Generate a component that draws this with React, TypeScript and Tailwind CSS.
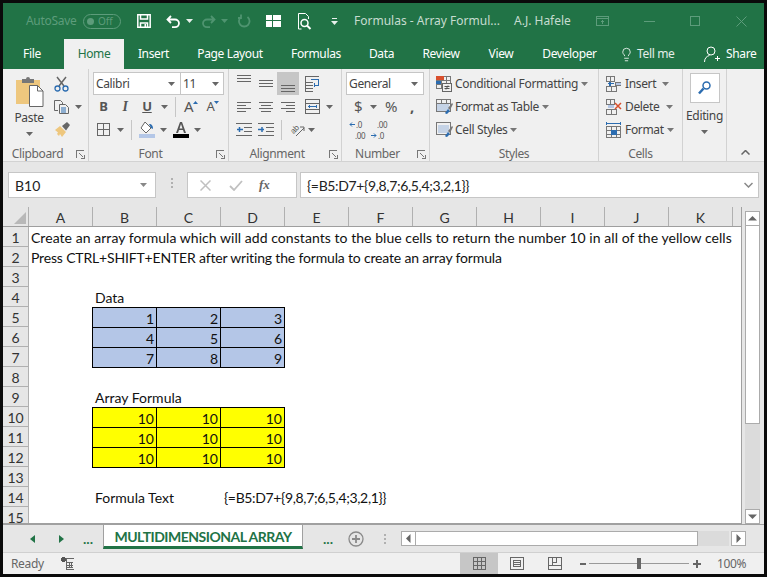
import React from 'react';
import { Lightbulb } from 'lucide-react';

const Caret = ({ color = '#666' }: { color?: string }) => (
  <svg width="7" height="4" viewBox="0 0 7 4"><path d="M0 0h7L3.5 4z" fill={color} /></svg>
);

const Slot = ({ className = '', children }: { className?: string; children?: React.ReactNode }) => (
  <div className={`flex h-full shrink-0 items-center justify-center ${className}`}>{children}</div>
);

const Sep = ({ className = '' }: { className?: string }) => <div className={`h-[20px] w-px shrink-0 self-center bg-[#c6c6c6] ${className}`} />;

const Launcher = () => (
  <svg width="9" height="9" viewBox="0 0 9 9" fill="none" stroke="#777" shapeRendering="crispEdges">
    <path d="M.5 8V.5H8M3 3l4.5 4.5M4.5 8.500h4v-4" />
  </svg>
);

const Group = ({ label, className, launcher, children }: { label: string; className: string; launcher?: boolean; children: React.ReactNode }) => (
  <div className={`flex shrink-0 flex-col border-r border-[#d2d2d2] ${className}`}>
    <div className="h-[72px] pt-[3px]">{children}</div>
    <div className="flex items-center pt-[4px] text-[#666]">
      <span className="flex-1 text-center leading-[18px]">{label}</span>
      {launcher ? <span className="flex w-[16px] justify-center"><Launcher /></span> : null}
    </div>
  </div>
);

const Row = ({ className = '', children }: { className?: string; children: React.ReactNode }) => (
  <div className={`flex h-[23px] items-center ${className}`}>{children}</div>
);

// horizontal lines used by the alignment buttons
const Lines = ({ rows, h = 23 }: { rows: [number, number, number][]; h?: number }) => (
  <svg width="15" height={h} viewBox={`0 0 15 ${h}`} stroke="#666" shapeRendering="crispEdges">
    {rows.map(([a, b, y]) => <line key={y} x1={a} x2={b} y1={y + 0.5} y2={y + 0.5} />)}
  </svg>
);

const Grid = ({ color = '#777' }: { color?: string }) => (
  <g stroke={color} fill="none" shapeRendering="crispEdges">
    <rect x=".5" y=".5" width="14" height="12" />
    <path d="M.5 4.500h14M.5 8.500h14M5.500.5v12M10.500.5v12" />
  </g>
);

const Brush = () => (
  <g>
    <path d="M9 14l3-4 2 2-3 3a2.500 2.500 0 0 1-2-1z" fill="#2b6cb0" />
    <path d="M12 9l4-5 1 1-3 6z" fill="#777" />
  </g>
);

const Toggle = () => (
  <div className="ml-[7px] flex h-[15px] w-[38px] items-center rounded-full border border-[#5d9c7b] pl-[3px] text-[10px] text-[#5d9c7b]">
    <span className="h-[7px] w-[7px] rounded-full bg-[#5d9c7b]" />
    <span className="ml-[4px] leading-none">Off</span>
  </div>
);

const TitleBar = () => (
  <div className="flex h-[36px] items-center bg-[#217346] text-[#c6dcd0]">
    <span className="ml-[23px] w-[50px] tracking-[-0.3px] text-[#5d9c7b]">AutoSave</span>
    <Toggle />
    <svg className="ml-[16px]" width="14" height="14" viewBox="0 0 14 14" fill="none" stroke="#fff" strokeWidth="1.500">
      <path d="M.8.8h12.400v12.400H.8zM3.500 1v4h7V1M3.500 13V9h7v4" />
      <rect x="7.500" y="10" width="1.500" height="3" fill="#fff" stroke="none" />
    </svg>
    <svg className="ml-[15px]" width="14" height="13" viewBox="0 0 14 13" fill="none" stroke="#fff" strokeWidth="1.800">
      <path d="M5 1L1.500 4.500 5 8M1.500 4.500H9a4 3.800 0 0 1 0 7.600H6" />
    </svg>
    <span className="ml-[6px]"><Caret color="#e8f0ec" /></span>
    <svg className="ml-[8px]" width="15" height="13" viewBox="0 0 15 13" fill="none" stroke="#4f9470" strokeWidth="1.800">
      <path d="M10 1l3.500 3.500L10 8M13.500 4.500H6a4 3.800 0 0 0 0 7.600h3" />
    </svg>
    <span className="ml-[5px]"><Caret color="#4f9470" /></span>
    <svg className="ml-[10px]" width="13" height="14" viewBox="0 0 13 14" fill="none" stroke="#4f9470" strokeWidth="1.800">
      <path d="M9.500 3a5.300 5.300 0 1 1-6.500 0M3 .5V4H0" />
    </svg>
    <svg className="ml-[15px]" width="15" height="12" viewBox="0 0 15 12" fill="#fff">
      <path d="M0 0h6v5H0zM7 0h8v5H7zM0 6h6v6H0zM7 6h8v6H7z" />
    </svg>
    <svg className="ml-[16px]" width="15" height="17" viewBox="0 0 15 17" fill="none" stroke="#fff">
      <path d="M1.500 16V.5h7l3 3V6M1.500 16h3" />
      <circle cx="7.500" cy="10" r="3.500" strokeWidth="1.500" />
      <path d="M10 12.500l3.500 3.500" strokeWidth="2" />
    </svg>
    <svg className="ml-[19px]" width="7" height="7" viewBox="0 0 7 7" fill="#e8f0ec"><path d="M1 0h5v1H1zM0 3h7L3.500 7z" /></svg>
    <span className="ml-[16px] w-[160px] whitespace-nowrap">Formulas - Array Formul...</span>
    <span className="w-[81px] whitespace-nowrap">A.J. Hafele</span>
    <svg className="ml-[1px]" width="13" height="10" viewBox="0 0 13 10" fill="none" stroke="#5d9c7b" shapeRendering="crispEdges">
      <path d="M.5.5h12v9H.5zM.5 2.500h12M6.500 8V4.500M5 6l1.500-1.500L8 6" />
    </svg>
    <div className="ml-[35px] h-px w-[11px] bg-[#5d9c7b]" />
    <div className="ml-[35px] h-[10px] w-[10px] border border-[#5d9c7b]" />
    <svg className="ml-[36px]" width="11" height="11" viewBox="0 0 11 11" stroke="#5d9c7b"><path d="M.5.5l10 10M10.500.5l-10 10" /></svg>
  </div>
);

const TabBar = () => (
  <div className="flex h-[30px] items-stretch whitespace-nowrap bg-[#217346] tracking-[-0.35px] text-[#fff]">
    <div className="mr-[3px] flex w-[58px] items-center justify-center">File</div>
    <div className="flex w-[60px] items-center justify-center bg-[#f0f0f0] text-[#217346]">Home</div>
    <div className="flex w-[59px] items-center justify-center">Insert</div>
    <div className="flex w-[94px] items-center justify-center">Page Layout</div>
    <div className="flex w-[78px] items-center justify-center">Formulas</div>
    <div className="flex w-[53px] items-center justify-center">Data</div>
    <div className="flex w-[66px] items-center justify-center">Review</div>
    <div className="flex w-[54px] items-center justify-center">View</div>
    <div className="flex w-[83px] items-center justify-center">Developer</div>
    <div className="ml-[8px] flex w-[85px] items-center text-[#e4eee9]">
      <Lightbulb size={15} strokeWidth={1.300} color="#fff" />
      <span className="ml-[3px]">Tell me</span>
    </div>
    <div className="flex items-center">
      <svg width="16" height="17" viewBox="0 0 16 17" fill="none" stroke="#fff">
        <circle cx="7" cy="5" r="4" />
        <path d="M.5 16c0-4 2.500-6 5-6.500M11 12.500h5M13.500 10v5" />
      </svg>
      <span className="ml-[6px]">Share</span>
    </div>
  </div>
);

const Clipboard = () => (
  <Group label="Clipboard" className="w-[86px]" launcher>
    <div className="flex h-full">
      <div className="ml-[10px] flex w-[32px] flex-col items-center">
        <svg className="mt-[5px]" width="29" height="30" viewBox="0 0 29 30">
          <path d="M1 3h24v24H1z" fill="#eec77e" />
          <path d="M7 2h4a2 2 0 0 1 4 0h4v4H7z" fill="#777" />
          <path d="M14.500 8.500h8l5.500 5.500v15.500H14.500z" fill="#fff" stroke="#666" />
          <path d="M22.500 8.500v5.500H28" fill="none" stroke="#666" />
        </svg>
        <span className="mt-[2px] text-[12px] leading-[18px] text-[#444]">Paste</span>
        <span className="mt-[5px]"><Caret /></span>
      </div>
      <div className="ml-[9px] flex flex-col">
        <Row>
          <svg width="15" height="16" viewBox="0 0 15 16" fill="none">
            <path d="M3 1l7 9M12 1L5 10" stroke="#666" strokeWidth="1.500" />
            <circle cx="3.500" cy="12.500" r="2.500" stroke="#2b6cb0" strokeWidth="1.300" />
            <circle cx="11.500" cy="12.500" r="2.500" stroke="#2b6cb0" strokeWidth="1.300" />
          </svg>
        </Row>
        <Row>
          <svg width="15" height="14" viewBox="0 0 15 14" fill="none" stroke="#666">
            <path d="M.5.5h6l2 2v2M.5.5v10h3.500" />
            <path d="M5.500 4.500h6l3 3v6h-9z" fill="#f0f0f0" />
            <path d="M7 8h5M7 10h5M7 12h5" stroke="#2b6cb0" />
          </svg>
          <span className="ml-[6px]"><Caret /></span>
        </Row>
        <Row>
          <svg width="17" height="16" viewBox="0 0 17 16">
            <path d="M1 8l5-4 6 6-4 5-2-3-1 2-2-2 1-1.500z" fill="#eec77e" />
            <path d="M8 4l5-4 3 3-4 5.500z" fill="#666" />
          </svg>
        </Row>
      </div>
    </div>
  </Group>
);

const FontGroup = () => (
  <Group label="Font" className="w-[140px]" launcher>
    <Row className="pl-[4px]">
      <div className="flex h-[23px] w-[131px] border border-[#c6c6c6] bg-white text-[#444]">
        <div className="flex w-[87px] items-center justify-between border-r border-[#c6c6c6] pl-[2px] pr-[5px]">
          <span>Calibri</span><Caret />
        </div>
        <div className="flex flex-1 items-center justify-between pl-[2px] pr-[4px]">
          <span>11</span><Caret />
        </div>
      </div>
    </Row>
    <Row className="pl-[4px] text-[#555]">
      <Slot className="w-[21px] text-[13px] font-bold">B</Slot>
      <Slot className="w-[22px] font-['Liberation_Serif',serif] text-[14px] font-bold italic">I</Slot>
      <Slot className="w-[22px] text-[13px] font-bold underline">U</Slot>
      <Slot className="w-[12px]"><Caret /></Slot>
      <Sep className="ml-[5px]" />
      <Slot className="w-[30px] text-[15px]">
        A<svg className="mb-[9px]" width="5" height="3" viewBox="0 0 5 3"><path d="M0 3h5L2.500 0z" fill="#2b6cb0" /></svg>
      </Slot>
      <Slot className="w-[14px] text-[13px]">
        A<svg className="mb-[9px]" width="5" height="3" viewBox="0 0 5 3"><path d="M0 0h5L2.500 3z" fill="#2b6cb0" /></svg>
      </Slot>
    </Row>
    <Row className="pl-[8px]">
      <svg width="13" height="13" viewBox="0 0 13 13" fill="none" stroke="#666" shapeRendering="crispEdges">
        <path d="M.5.5h12v12H.5zM6.500.5v12M.5 6.500h12" />
      </svg>
      <Slot className="ml-[4px] w-[12px]"><Caret /></Slot>
      <Sep className="ml-[5px]" />
      <svg className="ml-[7px]" width="16" height="17" viewBox="0 0 16 17">
        <path d="M6 1l6 6-5 5-5-5z" fill="#fff" stroke="#666" />
        <path d="M10 3c3 0 4 2 4 5l-2-1z" fill="#2b6cb0" />
        <rect y="13" width="16" height="4" fill="#b4c7e7" />
      </svg>
      <Slot className="ml-[2px] w-[12px]"><Caret /></Slot>
      <svg className="ml-[4px]" width="16" height="17" viewBox="0 0 16 17">
        <path d="M3 12L7 1h2l4 11h-2l-1-3H6l-1 3zM6.500 7.500h3L8 3z" fill="#555" fillRule="evenodd" />
        <rect y="13" width="16" height="4" fill="#000" />
      </svg>
      <Slot className="ml-[2px] w-[12px]"><Caret /></Slot>
    </Row>
  </Group>
);

const AlignmentGroup = () => (
  <Group label="Alignment" className="w-[113px]" launcher>
    <Row className="pl-[4px]">
      <Slot className="w-[22px]"><Lines rows={[[0, 14, 3], [0, 14, 6], [0, 14, 9]]} /></Slot>
      <Slot className="w-[22px]"><Lines rows={[[0, 14, 8], [0, 14, 11], [0, 14, 14]]} /></Slot>
      <Slot className="w-[22px] bg-[#c6c6c6]"><Lines rows={[[0, 14, 13], [0, 14, 16], [0, 14, 19]]} /></Slot>
      <Slot className="ml-[2px] w-[22px]">
        <svg width="15" height="16" viewBox="0 0 15 16" fill="none" stroke="#666" shapeRendering="crispEdges">
          <path d="M0 .5h14M0 6.500h8M0 9.500h8M0 12.500h8M0 15.500h8M.5 0v16" />
          <path d="M6 3.500h7.500v5.500H9" stroke="#2b6cb0" />
          <path d="M9 7v4" stroke="#2b6cb0" />
        </svg>
      </Slot>
    </Row>
    <Row className="pl-[4px]">
      <Slot className="w-[22px]"><Lines rows={[[0, 14, 7], [0, 9, 10], [0, 14, 13], [0, 9, 16]]} /></Slot>
      <Slot className="w-[22px]"><Lines rows={[[0, 14, 7], [2, 12, 10], [0, 14, 13], [2, 12, 16]]} /></Slot>
      <Slot className="w-[22px]"><Lines rows={[[0, 14, 7], [5, 14, 10], [0, 14, 13], [5, 14, 16]]} /></Slot>
      <Slot className="ml-[2px] w-[22px]">
        <svg width="15" height="15" viewBox="0 0 15 15" fill="none" stroke="#666" shapeRendering="crispEdges">
          <path d="M.5.5h14v14H.5zM.5 4.500h14M.5 10.500h14" />
          <path d="M3 7.500h9M4 6v3M11 6v3" stroke="#2b6cb0" />
        </svg>
      </Slot>
      <Slot className="w-[12px]"><Caret /></Slot>
    </Row>
    <Row className="pl-[4px]">
      <Slot className="w-[22px]">
        <svg width="16" height="13" viewBox="0 0 16 13" fill="none" stroke="#666" shapeRendering="crispEdges">
          <path d="M0 .5h16M8 4.500h8M8 8.500h8M0 12.500h16" />
          <path d="M1 6.500h6M3.500 4v5" stroke="#2b6cb0" strokeWidth="1.500" shapeRendering="auto" />
        </svg>
      </Slot>
      <Slot className="w-[22px]">
        <svg width="16" height="13" viewBox="0 0 16 13" fill="none" stroke="#666" shapeRendering="crispEdges">
          <path d="M0 .5h16M8 4.500h8M8 8.500h8M0 12.500h16" />
          <path d="M0 6.500h6M4 4v5" stroke="#2b6cb0" strokeWidth="1.500" shapeRendering="auto" />
        </svg>
      </Slot>
      <Sep className="ml-[4px]" />
      <Slot className="ml-[7px] w-[16px]">
        <svg className="overflow-visible" width="16" height="16" viewBox="0 0 16 16" fill="none">
          <text x="2" y="10" transform="rotate(-45 6 8)" fontSize="8" fill="#555" fontFamily="Liberation Sans">ab</text>
          <path d="M7 14L15 6M11 5h4v4" stroke="#666" />
        </svg>
      </Slot>
      <Slot className="w-[12px]"><Caret /></Slot>
    </Row>
  </Group>
);

// increase / decrease decimal buttons: arrow drawn, digits as text
const DecimalArrow = ({ d }: { d: string }) => (
  <svg width="6" height="5" viewBox="0 0 6 5" fill="none" stroke="#2b6cb0"><path d={d} /></svg>
);

const NumberGroup = () => (
  <Group label="Number" className="w-[88px]" launcher>
    <Row className="pl-[4px]">
      <div className="flex h-[23px] w-[78px] items-center justify-between border border-[#c6c6c6] bg-white pl-[2px] pr-[5px] text-[#444]">
        <span>General</span><Caret />
      </div>
    </Row>
    <Row className="pl-[7px] text-[#555]">
      <Slot className="w-[18px] text-[15px]">$</Slot>
      <Slot className="w-[12px]"><Caret /></Slot>
      <Slot className="w-[24px] text-[15px]">%</Slot>
      <Slot className="w-[18px] text-[15px] font-bold">,</Slot>
    </Row>
    <Row className="pl-[7px]">
      <div className="flex w-[14px] flex-col text-[8px] leading-[11px] text-[#555]">
        <span className="flex items-center"><DecimalArrow d="M6 2.500H1M3 .5l-2 2 2 2" /><span className="ml-px">.0</span></span>
        <span className="pl-[6px]">.00</span>
      </div>
      <div className="ml-[8px] flex w-[14px] flex-col text-[8px] leading-[11px] text-[#555]">
        <span className="pl-[6px]">.00</span>
        <span className="flex items-center"><DecimalArrow d="M0 2.500h5M3 .5l2 2-2 2" /><span className="ml-px">.0</span></span>
      </div>
    </Row>
  </Group>
);

const StyleRow = ({ icon, label }: { icon: React.ReactNode; label: string }) => (
  <Row className="pl-[6px]">
    <div className="flex w-[19px] shrink-0">{icon}</div>
    <span className="text-[#444]">{label}</span>
    <span className="ml-[3px]"><Caret color="#777" /></span>
  </Row>
);

const StylesGroup = () => (
  <Group label="Styles" className="w-[169px]">
    <StyleRow
      label="Conditional Formatting"
      icon={
        <svg width="16" height="16" viewBox="0 0 16 16">
          <g transform="translate(0 0)"><Grid /></g>
          <rect x="0" y="0" width="8" height="4" fill="#d9502e" />
          <rect x="0" y="5" width="5" height="3" fill="#2b6cb0" />
          <rect x="6.500" y="7.500" width="9" height="8" fill="#f0f0f0" stroke="#666" />
          <path d="M8.500 10.500h5M8.500 12.500h5M12 9.500l-2 4" stroke="#555" fill="none" />
        </svg>
      }
    />
    <StyleRow
      label="Format as Table"
      icon={<svg width="17" height="16" viewBox="0 0 17 16"><Grid /><rect x="1" y="5" width="12" height="7" fill="#c5d3e6" /><Brush /></svg>}
    />
    <StyleRow
      label="Cell Styles"
      icon={
        <svg width="17" height="16" viewBox="0 0 17 16">
          <rect x=".5" y=".5" width="14" height="12" fill="none" stroke="#777" />
          <rect x="2" y="3" width="11" height="8" fill="#c5d3e6" />
          <Brush />
        </svg>
      }
    />
  </Group>
);

const CellRow = ({ icon, label, caretClass }: { icon: React.ReactNode; label: string; caretClass: string }) => (
  <Row className="pl-[7px]">
    <div className="flex w-[19px] shrink-0">{icon}</div>
    <span className="text-[#444]">{label}</span>
    <span className={caretClass}><Caret color="#777" /></span>
  </Row>
);

const CellsGroup = () => (
  <Group label="Cells" className="w-[84px]">
    <CellRow
      label="Insert"
      caretClass="ml-[6px]"
      icon={
        <svg width="15" height="16" viewBox="0 0 15 16" fill="none" stroke="#777" shapeRendering="crispEdges">
          <path d="M.5.5h8v5h-8zM.5 10.500h10v5H.5zM5.500 10.500v5M4.500.5v5" />
          <path d="M2 7.500h6M4 5.500v4" stroke="#2b6cb0" strokeWidth="1.500" />
          <rect x="9" y="6" width="6" height="3" fill="#b4c7e7" />
        </svg>
      }
    />
    <CellRow
      label="Delete"
      caretClass="ml-[7px]"
      icon={
        <svg width="16" height="16" viewBox="0 0 16 16" fill="none" stroke="#777">
          <path d="M.5.5h8v5h-8zM.5 10.500h10v5H.5zM5.500 10.500v5M4.500.5v5" shapeRendering="crispEdges" />
          <path d="M9 4l6 6M15 4l-6 6" stroke="#d9502e" strokeWidth="1.500" />
          <rect x="2" y="6" width="6" height="3" fill="#b4c7e7" stroke="none" />
        </svg>
      }
    />
    <CellRow
      label="Format"
      caretClass="ml-[3px]"
      icon={
        <svg width="15" height="16" viewBox="0 0 15 16" fill="none" stroke="#777" shapeRendering="crispEdges">
          <path d="M0 1.500h15M.5 0v3M14.500 0v3" stroke="#2b6cb0" />
          <path d="M.5 4.500h14v11H.5zM.5 8.500h14M.5 12.500h14M5.500 4.500v11M10.500 4.500v11" />
          <rect x="5" y="8" width="6" height="5" fill="#2b6cb0" stroke="none" />
        </svg>
      }
    />
  </Group>
);

const EditingGroup = () => (
  <div className="flex w-[44px] shrink-0 flex-col items-center border-r border-[#d2d2d2]">
    <div className="mt-[4px] flex h-[30px] w-[30px] items-center justify-center border border-[#c6c6c6] bg-white">
      <svg width="13" height="14" viewBox="0 0 13 14" fill="none" stroke="#2b6cb0">
        <circle cx="8.500" cy="4.500" r="3.500" strokeWidth="1.500" />
        <path d="M5.500 7.500L1 12.500" strokeWidth="2.500" />
      </svg>
    </div>
    <span className="mt-[4px] leading-[18px] text-[#444]">Editing</span>
    <span className="mt-[5px]"><Caret /></span>
  </div>
);

const Ribbon = () => (
  <div className="flex h-[93px] border-b border-[#d2d2d2] bg-[#f0f0f0] tracking-[-0.35px]">
    <Clipboard />
    <FontGroup />
    <AlignmentGroup />
    <NumberGroup />
    <StylesGroup />
    <CellsGroup />
    <EditingGroup />
    <div className="flex flex-1 items-end justify-center pb-[6px]">
      <svg width="9" height="5" viewBox="0 0 9 5" fill="none" stroke="#666" strokeWidth="1.500"><path d="M.5 4.500l4-4 4 4" /></svg>
    </div>
  </div>
);

const FormulaBar = () => (
  <div className="flex h-[45px] items-start bg-[#e6e6e6] pt-[10px] font-['Lato',sans-serif] text-[14px] text-[#222]">
    <div className="ml-[5px] flex h-[26px] w-[148px] items-center justify-between border border-[#c6c6c6] bg-white pl-[6px] pr-[8px]">
      <span>B10</span><Caret color="#888" />
    </div>
    <div className="ml-[15px] mt-[6px] flex w-[2px] flex-col gap-[2px]">
      <span className="h-[2px] bg-[#b0b0b0]" />
      <span className="h-[2px] bg-[#b0b0b0]" />
      <span className="h-[2px] bg-[#b0b0b0]" />
    </div>
    <div className="ml-[14px] flex h-[26px] w-[110px] items-center border border-[#c6c6c6] bg-white">
      <svg className="ml-[12px]" width="11" height="11" viewBox="0 0 11 11" stroke="#c0c0c0" strokeWidth="1.500"><path d="M.5.5l10 10M10.500.5l-10 10" /></svg>
      <svg className="ml-[18px]" width="14" height="11" viewBox="0 0 14 11" fill="none" stroke="#c0c0c0" strokeWidth="1.800"><path d="M1 6l4 4 8-9" /></svg>
      <span className="ml-[16px] font-['Liberation_Serif',serif] text-[13px] font-bold italic text-[#666]">fx</span>
    </div>
    <div className="ml-[3px] flex h-[26px] w-[459px] items-center justify-between border border-[#c6c6c6] bg-white pl-[6px] pr-[5px]">
      <span className="tracking-[-0.35px]">{'{=B5:D7+{9,8,7;6,5,4;3,2,1}}'}</span>
      <svg width="9" height="6" viewBox="0 0 9 6" fill="none" stroke="#888" strokeWidth="1.500"><path d="M.5 1l4 4 4-4" /></svg>
    </div>
  </div>
);

const columns = ['A', 'B', 'C', 'D', 'E', 'F', 'G', 'H', 'I', 'J', 'K'];

const ColumnHeaders = () => (
  <div className="flex h-[20px] border-b border-[#9f9f9f] bg-[#e6e6e6] text-[#333]">
    <div className="flex w-[26px] shrink-0 items-end justify-end border-r border-[#b0b0b0] pb-[2px] pr-[2px]">
      <svg width="12" height="12" viewBox="0 0 12 12"><path d="M12 0v12H0z" fill="#b8b8b8" /></svg>
    </div>
    {columns.map(c => (
      <div key={c} className="flex w-[64px] shrink-0 items-center justify-center border-r border-[#b0b0b0] pt-[2px]">{c}</div>
    ))}
  </div>
);

const SheetRow = ({ n, children }: { n: number; children?: React.ReactNode }) => (
  <div className="flex h-[20px] shrink-0">
    <div className="flex w-[26px] shrink-0 items-center justify-center border-b border-r border-[#b0b0b0] bg-[#e6e6e6] pt-[2px] text-[#333]">{n}</div>
    <div className="flex flex-1 items-start whitespace-nowrap">{children}</div>
  </div>
);

const TableRow = ({ values, fill }: { values: number[]; fill: string }) => (
  <>
    <div className="w-[63px] shrink-0" />
    {values.map((v, i) => (
      <div key={i} className={`-mr-px h-[21px] w-[65px] shrink-0 border border-black pr-[2px] text-right leading-[20px] ${fill}`}>
        <span className="relative top-px">{v}</span>
      </div>
    ))}
  </>
);

const TextCell = ({ className = '', children }: { className?: string; children: React.ReactNode }) => (
  <div className={`shrink-0 pl-[2px] pt-px leading-[20px] ${className}`}>{children}</div>
);

const Sheet = () => (
  <div className="flex min-h-0 flex-1 flex-col overflow-hidden border-b border-r border-[#a0a0a0] bg-white font-['Lato',sans-serif] text-[14px] text-[#111]">
    <ColumnHeaders />
    <SheetRow n={1}><TextCell className="tracking-[0.05px]">Create an array formula which will add constants to the blue cells to return the number 10 in all of the yellow cells</TextCell></SheetRow>
    <SheetRow n={2}><TextCell className="tracking-[-0.17px]">Press CTRL+SHIFT+ENTER after writing the formula to create an array formula</TextCell></SheetRow>
    <SheetRow n={3} />
    <SheetRow n={4}><div className="w-[64px] shrink-0" /><TextCell>Data</TextCell></SheetRow>
    <SheetRow n={5}><TableRow values={[1, 2, 3]} fill="bg-[#b4c6e7]" /></SheetRow>
    <SheetRow n={6}><TableRow values={[4, 5, 6]} fill="bg-[#b4c6e7]" /></SheetRow>
    <SheetRow n={7}><TableRow values={[7, 8, 9]} fill="bg-[#b4c6e7]" /></SheetRow>
    <SheetRow n={8} />
    <SheetRow n={9}><div className="w-[64px] shrink-0" /><TextCell>Array Formula</TextCell></SheetRow>
    <SheetRow n={10}><TableRow values={[10, 10, 10]} fill="bg-[#ffff00]" /></SheetRow>
    <SheetRow n={11}><TableRow values={[10, 10, 10]} fill="bg-[#ffff00]" /></SheetRow>
    <SheetRow n={12}><TableRow values={[10, 10, 10]} fill="bg-[#ffff00]" /></SheetRow>
    <SheetRow n={13} />
    <SheetRow n={14}>
      <div className="w-[64px] shrink-0" />
      <TextCell className="w-[128px]">Formula Text</TextCell>
      <TextCell className="pl-[3px] tracking-[-0.35px]">{'{=B5:D7+{9,8,7;6,5,4;3,2,1}}'}</TextCell>
    </SheetRow>
    <SheetRow n={15} />
  </div>
);

const ScrollButton = ({ d, className = '' }: { d: string; className?: string }) => (
  <div className={`flex shrink-0 items-center justify-center border border-[#ababab] bg-white ${className}`}>
    <svg width="9" height="9" viewBox="0 0 9 9"><path d={d} fill="#666" /></svg>
  </div>
);

const VScroll = () => (
  <div className="ml-[3px] mr-[4px] flex w-[15px] shrink-0 flex-col pt-[4px]">
    <ScrollButton className="h-[15px]" d="M0 6.500h9L4.500 2z" />
    <div className="h-[198px] shrink-0 border border-t-0 border-[#ababab] bg-white" />
    <div className="flex-1 bg-[#dbdbdb]" />
    <ScrollButton className="h-[15px]" d="M0 2.500h9L4.500 7z" />
  </div>
);

const SheetTabs = () => (
  <div className="flex h-[28px] items-start border-t border-[#a0a0a0] bg-[#e6e6e6]">
    <svg className="ml-[27px] mt-[10px]" width="5" height="8" viewBox="0 0 5 8"><path d="M5 0v8L0 4z" fill="#217346" /></svg>
    <svg className="ml-[24px] mt-[10px]" width="5" height="8" viewBox="0 0 5 8"><path d="M0 0v8l5-4z" fill="#217346" /></svg>
    <span className="ml-[19px] mt-[8px] w-[10px] text-[12px] font-bold leading-[14px] text-[#217346]">...</span>
    <div className="ml-[10px] flex h-[24px] w-[200px] items-center justify-center border-x border-b-[3px] border-[#a0a0a0] border-b-[#217346] bg-white pt-px font-['Lato',sans-serif] text-[14px] font-bold tracking-[-0.5px] text-[#217346]">
      MULTIDIMENSIONAL ARRAY
    </div>
    <span className="ml-[20px] mt-[8px] w-[10px] text-[12px] font-bold leading-[14px] text-[#217346]">...</span>
    <svg className="ml-[15px] mt-[6px]" width="16" height="16" viewBox="0 0 16 16" fill="none" stroke="#8a8a8a">
      <circle cx="8" cy="8" r="7" strokeWidth="1.300" />
      <path d="M4 8h8M8 4v8" strokeWidth="1.800" />
    </svg>
    <div className="ml-[20px] mt-[9px] flex w-[2px] flex-col gap-[2px]">
      <span className="h-[2px] bg-[#b0b0b0]" />
      <span className="h-[2px] bg-[#b0b0b0]" />
      <span className="h-[2px] bg-[#b0b0b0]" />
    </div>
    <div className="ml-[15px] mt-[6px] flex h-[15px] w-[343px]">
      <ScrollButton className="w-[15px]" d="M6.500 0v9L2 4.500z" />
      <div className="w-[282px] shrink-0 border border-l-0 border-[#ababab] bg-white" />
      <div className="w-[31px] shrink-0 bg-[#dbdbdb]" />
      <ScrollButton className="ml-[2px] w-[15px]" d="M2.500 0v9L7 4.500z" />
    </div>
  </div>
);

const StatusBar = () => (
  <div className="flex h-[22px] items-center border-t border-[#d0d0d0] bg-[#f0f0f0] tracking-[-0.35px] text-[#666]">
    <span className="ml-[8px] w-[50px]">Ready</span>
    <svg width="13" height="13" viewBox="0 0 13 13" fill="none" stroke="#666" shapeRendering="crispEdges">
      <rect x="5" y="1" width="8" height="11" />
      <path d="M6 5.500h6M6 8h6M6 10.500h6M8 5v6M10.500 5v6" />
      <circle cx="2.500" cy="2.500" r="2.500" fill="#555" stroke="none" />
    </svg>
    <div className="ml-[386px] flex h-full w-[38px] items-center justify-center bg-[#c6c6c6]">
      <svg width="13" height="13" viewBox="0 0 13 13" fill="none" stroke="#666" shapeRendering="crispEdges">
        <path d="M.5.5h12v12H.5zM.5 4.500h12M.5 8.500h12M4.500.5v12M8.500.5v12" />
      </svg>
    </div>
    <svg className="ml-[12px]" width="14" height="13" viewBox="0 0 14 13" fill="none" stroke="#666" shapeRendering="crispEdges">
      <path d="M.5.5h13v12H.5zM3.500 3.500h7v6h-7zM4 5.500h6M4 7.500h6" />
    </svg>
    <svg className="ml-[24px]" width="14" height="13" viewBox="0 0 14 13" fill="none" stroke="#666" shapeRendering="crispEdges">
      <path d="M.5.5h13v12H.5zM.5 8.500h13M4.500.5v8M8.500.5v5h-4" />
    </svg>
    <div className="ml-[18px] h-[2px] w-[6px] bg-[#666]" />
    <div className="ml-[3px] flex h-[11px] w-[100px] items-center">
      <div className="h-px w-[48px] bg-[#9a9a9a]" />
      <div className="h-[11px] w-[4px] bg-[#666]" />
      <div className="h-px w-[48px] bg-[#9a9a9a]" />
    </div>
    <svg className="ml-[4px]" width="8" height="8" viewBox="0 0 8 8" fill="#666"><path d="M3 0h2v3h3v2H5v3H3V5H0V3h3z" /></svg>
    <span className="ml-[16px]">100%</span>
  </div>
);

const App = () => (
  <div className="h-[577px] w-[767px] overflow-hidden bg-[#0a0a0a] p-[3px] font-['Noto_Sans',sans-serif] text-[12px]">
    <div className="flex h-[571px] w-[761px] flex-col overflow-hidden bg-[#e6e6e6]">
      <TitleBar />
      <TabBar />
      <Ribbon />
      <FormulaBar />
      <div className="flex min-h-0 flex-1">
        <Sheet />
        <VScroll />
      </div>
      <SheetTabs />
      <StatusBar />
    </div>
  </div>
);

export default App;
